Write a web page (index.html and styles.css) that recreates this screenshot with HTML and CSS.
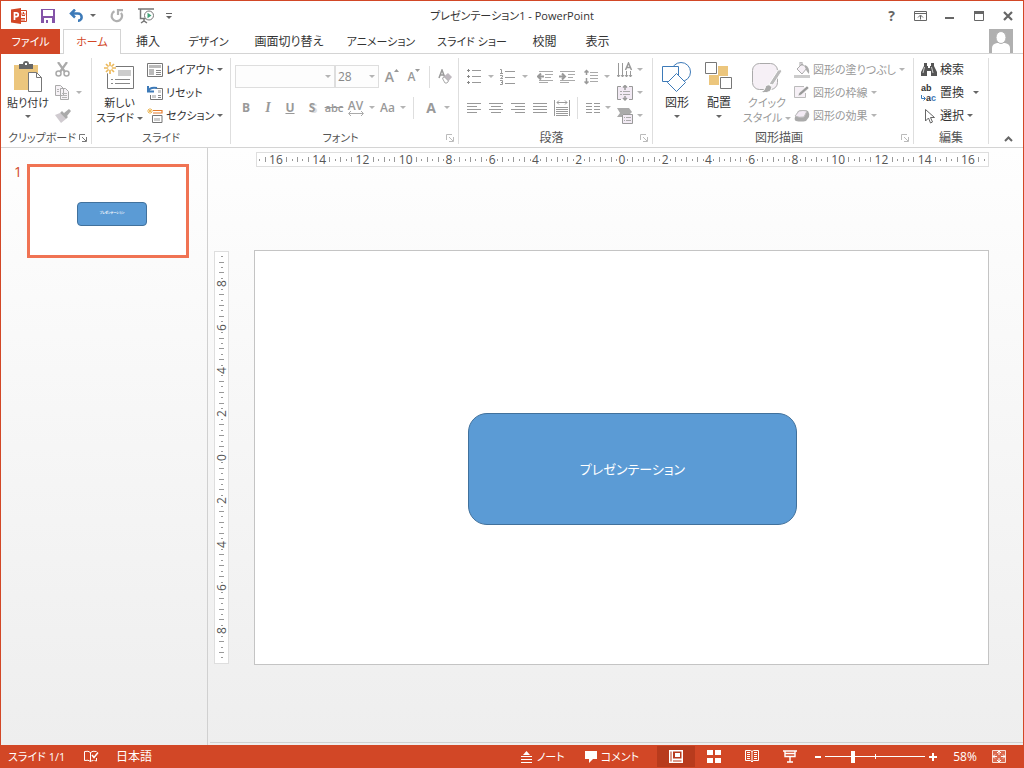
FILE: index.html
```html
<!DOCTYPE html>
<html lang="ja">
<head>
<meta charset="utf-8">
<title>プレゼンテーション1 - PowerPoint</title>
<link rel="stylesheet" href="styles.css">
</head>
<body>
<div class="app">
  <header class="titlebar">
    <div class="quick">
      <svg class="logo" width="16" height="16" viewBox="0 0 16 16"><path d="M8 2.500h7.500v11H8z" fill="#fff" stroke="#d24726"/><path d="M0 1.500 10 0v16L0 14.500z" fill="#d24726"/><path d="M3.500 12V4.800h1.800a1.900 1.900 0 0 1 0 3.900H3.500" fill="none" stroke="#fff" stroke-width="1.700"/><path d="M11 4.500v3h3M10 10.500h4M10 12h4M12.500 4v2h2" stroke="#d24726" fill="none"/></svg>
      <button class="tool save" aria-label="上書き保存"><svg width="14" height="14" viewBox="0 0 14 14"><path d="M0 0h14v14H0z" fill="#8454a8"/><path d="M2 1h10v6H2zM3 9h8v5H3z" fill="#fff"/><path d="M5 11h2v3H5z" fill="#8454a8"/></svg></button>
      <button class="tool undo" aria-label="元に戻す"><svg width="15" height="13" viewBox="0 0 15 13"><path d="M2 4.500h7a3.600 3.600 0 0 1 0 7.300M6 .500l-4 4 4 4" fill="none" stroke="#3d7ab8" stroke-width="2.500"/></svg><i class="caret"></i></button>
      <button class="tool redo" aria-label="繰り返し"><svg width="14" height="14" viewBox="0 0 14 14"><path d="M4.500 2.300a5.200 5.200 0 1 0 6.500 1.500M8 6V1.200h5" fill="none" stroke="#b0b0b0" stroke-width="2.200"/></svg></button>
      <button class="tool show" aria-label="スライド ショー"><svg width="17" height="16" viewBox="0 0 17 16"><path d="M0 1h16M2.500 1v9.500H8M6 11v2M3 15l3-2 3 2" fill="none" stroke="#777" stroke-width="1.500"/><circle cx="11" cy="7.500" r="4.500" fill="#fff" stroke="#777"/><path d="M9.500 4.800v5.400l4-2.700z" fill="#3fa377"/></svg></button>
      <button class="tool more" aria-label="クイック アクセスのカスタマイズ"><span class="bar"></span><i class="caret"></i></button>
    </div>
    <h1 class="doc-title">プレゼンテーション1 - PowerPoint</h1>
    <div class="window-buttons">
      <button aria-label="ヘルプ" class="help">?</button>
      <button aria-label="リボンの表示オプション"><svg width="13" height="10" viewBox="0 0 13 10"><path d="M.5.5h12v9H.5zM.5 2.500h12M6.500 8.500v-4M4 6.500l2.500-2.500L9 6.500" fill="none" stroke="#666"/></svg></button>
      <button aria-label="最小化"><svg width="10" height="10" viewBox="0 0 10 10"><path d="M0 6h9v2H0z" fill="#666"/></svg></button>
      <button aria-label="最大化"><svg width="10" height="10" viewBox="0 0 10 10"><path d="M.5.5h9v9h-9z" fill="none" stroke="#666"/><path d="M0 0h10v3H0z" fill="#666"/></svg></button>
      <button aria-label="閉じる"><svg width="10" height="10" viewBox="0 0 10 10"><path d="m1 1 8 8M9 1 1 9" stroke="#666" stroke-width="2.200"/></svg></button>
    </div>
  </header>

  <nav class="tabs">
    <button class="tab file compact">ファイル</button>
    <button class="tab home compact">ホーム</button>
    <button class="tab insert">挿入</button>
    <button class="tab design compact">デザイン</button>
    <button class="tab transition">画面切り替え</button>
    <button class="tab animation compact">アニメーション</button>
    <button class="tab slideshow compact">スライド ショー</button>
    <button class="tab review">校閲</button>
    <button class="tab display">表示</button>
    <button class="avatar" aria-label="アカウント"><svg width="24" height="24" viewBox="0 0 24 24"><path d="M0 0h24v24H0z" fill="#b0b0b0"/><path d="M3 24v-5q0-4 5-5h8q5 1 5 5v5z" fill="#fff"/><ellipse cx="12" cy="8.500" rx="5" ry="6" fill="#fff" stroke="#b0b0b0"/></svg></button>
  </nav>

  <section class="ribbon">
    <div class="group clipboard">
      <div class="group-body">
        <button class="big paste compact"><svg width="30" height="32" viewBox="0 0 30 32"><path d="M1 4h24v25H1z" fill="#ecc67d"/><path d="M6 3h4q0-3 3-3t3 3h4v5H6z" fill="#666"/><path d="M12 2h2v2h-2z" fill="#fff"/><path d="M15.500 11.500h8l5 5v14h-13z" fill="#fff" stroke="#777"/><path d="M23.500 11.500v5h5" fill="none" stroke="#777"/></svg><span>貼り付け</span><i class="caret"></i></button>
        <div class="stack">
          <button class="item off" aria-label="切り取り"><svg width="15" height="15" viewBox="0 0 15 15"><path d="m3 0 7 10M12 0 5 10" stroke="#aaa" stroke-width="2.200"/><circle cx="3.500" cy="11.500" r="2.500" fill="none" stroke="#aaa" stroke-width="1.500"/><circle cx="11.500" cy="11.500" r="2.500" fill="none" stroke="#aaa" stroke-width="1.500"/></svg></button>
          <button class="item off" aria-label="コピー"><svg width="15" height="15" viewBox="0 0 15 15"><path d="M.5.5h5l3 3v7h-8zM5.500 3.500h5l3 3v8h-8z" fill="#f6f2f6" stroke="#aaa"/><path d="M2 4.500h2M2 6.500h2M7 8.500h5M7 10.500h5M7 12.500h5" stroke="#b4b4b4"/></svg><i class="caret"></i></button>
          <button class="item off" aria-label="書式のコピー/貼り付け"><svg width="16" height="14" viewBox="0 0 16 14"><path d="m0 6 5-2 6 6-5 4z" fill="#d0cbd0"/><path d="m5 4 2-2 6 6-2 2zM9 4l5-4 2 2-4 5z" fill="#aaa"/></svg></button>
        </div>
      </div>
      <div class="group-label compact"><span>クリップボード</span><button class="launcher" aria-label="クリップボードの設定"><svg width="8" height="8" viewBox="0 0 8 8"><path d="M.5 6V.5H6M3 3l4 4M7.500 3v4.500H3" fill="none" stroke="currentColor"/></svg></button></div>
    </div>

    <div class="group slides">
      <div class="group-body">
        <button class="big new-slide compact"><svg width="31" height="30" viewBox="0 0 31 30"><path d="M3.500 4.500h26v22h-26z" fill="#fff" stroke="#777"/><path d="M14 8h13v6H14z" fill="#ccc"/><path d="M7 17.500h2M11 17.500h15M7 21.500h2M11 21.500h15" stroke="#888"/><circle cx="6" cy="6" r="6" fill="#fff"/><path d="M6 0v12M0 6h12M2 2l8 8M10 2l-8 8" stroke="#ecb95c" stroke-width="1.700"/><circle cx="6" cy="6" r="2" fill="#fff"/></svg><span>新しい</span><span>スライド <i class="caret"></i></span></button>
        <div class="stack">
          <button class="item compact"><svg width="16" height="14" viewBox="0 0 16 14"><path d="M.5.5h15v13H.5z" fill="#fff" stroke="#777"/><path d="M2 2h12v3H2zM2 6h5v6H2z" fill="#bbb"/><path d="M9 7.500h5M9 9.500h5M9 11.500h5" stroke="#888"/></svg><span>レイアウト</span><i class="caret"></i></button>
          <button class="item compact"><svg width="16" height="14" viewBox="0 0 16 14"><path d="M9 2.500h6.500v11H3.500V9" fill="#fff" stroke="#777"/><path d="M11 4h3v3h-3zM5 9h4v3H5z" fill="#ccc"/><path d="M1 5.500q2-5 9-3.500M1 0v5.500h6" fill="none" stroke="#3d7ab8" stroke-width="2"/><path d="M11 9.500h3M11 11.500h3" stroke="#888"/></svg><span>リセット</span></button>
          <button class="item compact"><svg width="16" height="15" viewBox="0 0 16 15"><path d="M6 2.500h9v2.500H6" fill="none" stroke="#e57c2c" stroke-width="1.200"/><path d="M5.500 7.500h9.500v7H5.500z" fill="#fff" stroke="#777"/><path d="M7 10h6v3H7z" fill="#ccc"/><path d="M3 0v6M0 3h6M1 1l4 4M5 1 1 5" stroke="#ecb95c"/></svg><span>セクション</span><i class="caret"></i></button>
        </div>
      </div>
      <div class="group-label compact"><span>スライド</span></div>
    </div>

    <div class="group font">
      <div class="group-body rows">
        <div class="row">
          <span class="combo name"><select aria-label="フォント" disabled><option></option></select></span>
          <span class="combo size"><select aria-label="フォント サイズ" disabled><option>28</option></select></span>
          <button class="cell off grow" aria-label="フォント サイズの拡大">A<svg width="5" height="3" viewBox="0 0 5 3"><path d="M0 3h5L2.500 0z" fill="#999"/></svg></button>
          <button class="cell off shrink" aria-label="フォント サイズの縮小">A<svg width="5" height="3" viewBox="0 0 5 3"><path d="M0 0h5L2.500 3z" fill="#999"/></svg></button>
          <span class="rule"></span>
          <button class="cell off" aria-label="書式のクリア"><svg width="15" height="15" viewBox="0 0 15 15"><path d="m1 9 3-8 3 8M2 6h4" fill="none" stroke="#999" stroke-width="1.500"/><path d="m4 9 6-5 4 4-5 6z" fill="#bfb9bf"/><path d="m4.500 9.500 2-1.500 4 4-1.500 2H7z" fill="#fff" stroke="#aaa"/></svg></button>
        </div>
        <div class="row lower">
          <button class="cell off"><b>B</b></button>
          <button class="cell off italic"><b>I</b></button>
          <button class="cell off"><b class="underline">U</b></button>
          <button class="cell off shadow"><b>S</b></button>
          <button class="cell off strike">abc</button>
          <button class="cell wide off spacing" aria-label="文字の間隔"><span>AV<svg width="16" height="5" viewBox="0 0 16 5"><path d="M1 2.500h14M3 0 .500 2.500 3 5M13 0l2.500 2.500L13 5" fill="none" stroke="#aaa"/></svg></span><i class="caret"></i></button>
          <button class="cell wide off case">Aa<i class="caret"></i></button>
          <span class="rule"></span>
          <button class="cell wide off color"><b>A</b><i class="caret"></i></button>
        </div>
      </div>
      <div class="group-label compact"><span>フォント</span><button class="launcher off" aria-label="フォントの設定"><svg width="8" height="8" viewBox="0 0 8 8"><path d="M.5 6V.5H6M3 3l4 4M7.500 3v4.500H3" fill="none" stroke="currentColor"/></svg></button></div>
    </div>

    <div class="group paragraph">
      <div class="group-body">
        <div class="rows">
          <div class="row">
            <button class="cell list off" aria-label="箇条書き"><svg width="14" height="15" viewBox="0 0 14 15"><path d="M5 1.500h9M5 7.500h9M5 13.500h9" stroke="#999"/><path d="M0 1h1V0h1v1h1v1H2v1H1V2H0zM0 7h1V6h1v1h1v1H2v1H1V8H0zM0 13h1v-1h1v1h1v1H2v1H1v-1H0z" fill="#888"/></svg><i class="caret"></i></button>
            <button class="cell list off" aria-label="段落番号"><svg width="15" height="16" viewBox="0 0 15 16"><path d="M5 2.500h10M5 8.500h10M5 14.500h10" stroke="#999"/><path d="M0 .5h1.500V4M0 4.500h3M0 6.500h2.500v1.500L.500 9.500H3M0 11.500h2.500v4H0M1 13.500h1.500" fill="none" stroke="#999"/></svg><i class="caret"></i></button>
            <button class="cell gap off" aria-label="インデントを減らす"><svg width="16" height="12" viewBox="0 0 16 12"><path d="M2 .5h14M8 3.500h8M8 6.500h6M2 9.500h14M2 11.500h9" stroke="#aaa"/><path d="M1 5.500h6M4 2.500l-3 3 3 3" fill="none" stroke="#999" stroke-width="2"/></svg></button>
            <button class="cell off" aria-label="インデントを増やす"><svg width="16" height="12" viewBox="0 0 16 12"><path d="M1 .5h15M9 3.500h7M9 6.500h5M1 9.500h15M1 11.500h9" stroke="#aaa"/><path d="M0 5.500h6M3 2.500l3 3-3 3" fill="none" stroke="#999" stroke-width="2"/></svg></button>
            <button class="cell spread off" aria-label="行間"><svg width="14" height="16" viewBox="0 0 14 16"><path d="M6 3.500h8M6 6.500h8M6 9.500h8M6 12.500h8" stroke="#aaa"/><path d="M2.500 1v5M.500 3.500l2-2 2 2M2.500 9v6M.500 12.500l2 2 2-2" fill="none" stroke="#999" stroke-width="1.500"/></svg><i class="caret"></i></button>
          </div>
          <div class="row">
            <button class="cell off" aria-label="左揃え"><svg width="14" height="12" viewBox="0 0 14 12"><path d="M0 1.500h14M0 4.500h10M0 7.500h14M0 10.500h10" stroke="#999"/></svg></button>
            <button class="cell off" aria-label="中央揃え"><svg width="14" height="12" viewBox="0 0 14 12"><path d="M0 1.500h14M2 4.500h10M0 7.500h14M2 10.500h10" stroke="#999"/></svg></button>
            <button class="cell off" aria-label="右揃え"><svg width="14" height="12" viewBox="0 0 14 12"><path d="M0 1.500h14M4 4.500h10M0 7.500h14M4 10.500h10" stroke="#999"/></svg></button>
            <button class="cell off" aria-label="両端揃え"><svg width="14" height="12" viewBox="0 0 14 12"><path d="M0 1.500h14M0 4.500h14M0 7.500h14M0 10.500h14" stroke="#999"/></svg></button>
            <button class="cell off" aria-label="均等割り付け"><svg width="16" height="16" viewBox="0 0 16 16"><path d="M.5 0v16M15.500 0v16M2 7.500h12M2 9.500h12M2 11.500h12M2 13.500h12M2 15.500h12M3 2.500h10M5 .500l-2 2 2 2M11 .500l2 2-2 2" fill="none" stroke="#999"/></svg></button>
            <span class="rule"></span>
            <button class="cell wide off" aria-label="段組み"><svg width="14" height="12" viewBox="0 0 14 12"><path d="M0 1.500h6M0 4.500h6M0 7.500h6M0 10.500h6M8 1.500h6M8 4.500h6M8 7.500h6M8 10.500h6" stroke="#999"/></svg><i class="caret"></i></button>
          </div>
        </div>
        <div class="stack">
          <button class="item off" aria-label="文字列の方向"><svg width="16" height="16" viewBox="0 0 16 16"><path d="M1.500 1v14M5.500 1v14M9.500 9v6M13.500 9v6M0 13l1.500 2L3 13M4 13l1.500 2L7 13M8 13l1.500 2 1.500-2M12 13l1.500 2 1.500-2" fill="none" stroke="#999"/><path d="m8.500 8 3-7 3 7M9.500 5.500h4" fill="none" stroke="#999" stroke-width="1.500"/></svg><i class="caret"></i></button>
          <button class="item off" aria-label="文字の配置"><svg width="16" height="16" viewBox="0 0 16 16"><path d="M1 2h14v12H1z" fill="#f2eaf4"/><path d="M4 1.500H.500v13H4M12 1.500h3.500v13H12" fill="none" stroke="#999"/><path d="M3 6.500h2M6 6.500h7M3 9.500h2M6 9.500h7" stroke="#aaa"/><path d="M8 0v5M6 2.500 8 .500l2 2M8 11v4.500M6 13l2 2 2-2" fill="none" stroke="#999" stroke-width="1.500"/></svg><i class="caret"></i></button>
          <button class="item off" aria-label="SmartArt に変換"><svg width="16" height="16" viewBox="0 0 16 16"><path d="M0 0h12l3 4-2 2H5v3H0l3-4z" fill="#aaa"/><path d="M5.500 6.500h10v9h-10z" fill="#f2eaf4" stroke="#999"/><path d="M7 9.500h1M9 9.500h5M7 12.500h1M9 12.500h5" stroke="#aaa"/></svg><i class="caret"></i></button>
        </div>
      </div>
      <div class="group-label"><span>段落</span><button class="launcher off" aria-label="段落の設定"><svg width="8" height="8" viewBox="0 0 8 8"><path d="M.5 6V.5H6M3 3l4 4M7.500 3v4.500H3" fill="none" stroke="currentColor"/></svg></button></div>
    </div>

    <div class="group drawing">
      <div class="group-body">
        <button class="big"><svg width="30" height="32" viewBox="0 0 30 32"><circle cx="19" cy="11" r="9.500" fill="#fff" stroke="#3d7ab8"/><path d="M.5 5.500h16v15H.500z" fill="#fff" stroke="#3d7ab8"/><path d="m14.500 12.500 9 9-9 9-9-9z" fill="#fff" stroke="#3d7ab8"/></svg><span>図形</span><i class="caret"></i></button>
        <button class="big"><svg width="28" height="32" viewBox="0 0 28 32"><path d="M13 5h10v10H13zM4 14h10v10H4z" fill="#ecc67d"/><path d="M.5 1.500h11v11H.500zM15.500 16.500h11v11h-11z" fill="#fff" stroke="#777"/></svg><span>配置</span><i class="caret"></i></button>
        <button class="big off quick-style compact"><svg width="30" height="32" viewBox="0 0 30 32"><rect x=".5" y="2.500" width="25" height="26" rx="7" fill="#f6f0f6" stroke="#aaa"/><path d="m17 23 9-14q3-1 4 1l-9 14z" fill="#bbb" stroke="#fff"/><path d="M8 31q5-1 5-4 1-4 5-3 3 2 1 5-3 4-11 2z" fill="#aaa" stroke="#fff"/></svg><span>クイック</span><span>スタイル <i class="caret"></i></span></button>
        <div class="stack">
          <button class="item off compact"><svg width="16" height="16" viewBox="0 0 16 16"><path d="M0 13h16v3H0z" fill="#ccc"/><path d="m3 7 5-5 5 4-5 6zM6 4V0h2v4" fill="#f6f0f6" stroke="#aaa"/><path d="M11 3q5 2 4 9-3-3-4-7" fill="#aaa"/></svg><span>図形の塗りつぶし</span><i class="caret"></i></button>
          <button class="item off compact"><svg width="16" height="16" viewBox="0 0 16 16"><path d="M10 1.500H.500v11h11V8" fill="#f6f0f6" stroke="#bbb"/><path d="m4 11 1-3 8-7 2 2-8 7z" fill="#999" stroke="#fff" stroke-width=".5"/></svg><span>図形の枠線</span><i class="caret"></i></button>
          <button class="item off compact"><svg width="16" height="16" viewBox="0 0 16 16"><path d="m1 9 3-6q5-2 10 0 2 3 1 6l-3 4q-5 1-10 0-2-1-1-4z" fill="#aaa"/><path d="m1 8 4-5q4-1 8 0L10 9q-5 1-9-1z" fill="#f2eaf4" stroke="#bbb"/></svg><span>図形の効果</span><i class="caret"></i></button>
        </div>
      </div>
      <div class="group-label"><span>図形描画</span><button class="launcher off" aria-label="図形描画の設定"><svg width="8" height="8" viewBox="0 0 8 8"><path d="M.5 6V.5H6M3 3l4 4M7.500 3v4.500H3" fill="none" stroke="currentColor"/></svg></button></div>
    </div>

    <div class="group editing">
      <div class="group-body">
        <div class="stack">
          <button class="item"><svg width="16" height="14" viewBox="0 0 16 14"><path d="M3 0h3v3h1v2h2V3h1V0h3v3l3 6v4h-6V8H6v5H0V9l3-6z" fill="#555"/><path d="M3.500 4 2 10M10.500 4l1.500 6" stroke="#fff" stroke-width=".7"/></svg><span>検索</span></button>
          <button class="item replace"><span class="letters" aria-hidden="true"><small>ab</small><small class="low"><svg width="5" height="6" viewBox="0 0 5 6"><path d="M.5 0v3.500H4M2.500 1.500l2 2-2 2" fill="none" stroke="#3d7ab8"/></svg>a<em>c</em></small></span><span>置換</span><i class="caret"></i></button>
          <button class="item"><svg width="16" height="16" viewBox="0 0 16 16"><path d="M4.500 1.500v11.500l3-3 2 5 2-1-2-4.500h4z" fill="#fff" stroke="#666"/></svg><span>選択</span><i class="caret"></i></button>
        </div>
      </div>
      <div class="group-label"><span>編集</span></div>
    </div>
    <button class="collapse" aria-label="リボンを折りたたむ"><svg width="9" height="6" viewBox="0 0 9 6"><path d="m1 5 3.500-3.500L8 5" fill="none" stroke="#666" stroke-width="2"/></svg></button>
  </section>

  <main class="workspace">
    <aside class="thumbs">
      <span class="number">1</span>
      <div class="thumb"><div class="shape small">プレゼンテーション</div></div>
    </aside>
    <section class="editor">
      <div class="ruler across" data-slots="135"></div>
      <div class="canvas">
        <div class="ruler down" data-slots="75"></div>
        <div class="slide"><div class="shape">プレゼンテーション</div></div>
      </div>
    </section>
  </main>

  <footer class="status">
    <span class="page compact">スライド 1/1</span>
    <button class="proof" aria-label="スペル チェック"><svg width="15" height="13" viewBox="0 0 15 13"><path d="M6.500 2.500q-2-2-6-1v9q4-1 6 1 1-1 3-1M6.500 2.500v9M6.500 2.500q2-2 6-1M12.500 8v3l-2-.500" fill="none" stroke="#fff"/><path d="m8 5 2 2.500 4-5" fill="none" stroke="#fff" stroke-width="1.500"/></svg></button>
    <button class="lang">日本語</button>
    <button class="note compact"><svg width="11" height="12" viewBox="0 0 11 12"><path d="M2 4h7L5.500 0z" fill="#fff"/><path d="M0 5.500h11M0 8.500h11M0 11.500h11" stroke="#fff"/></svg>ノート</button>
    <button class="comment compact"><svg width="12" height="12" viewBox="0 0 12 12"><path d="M0 0h12v8H8l-4 4V8H0z" fill="#fff"/></svg>コメント</button>
    <div class="views">
      <button class="active" aria-label="標準"><svg width="14" height="13" viewBox="0 0 14 13"><path d="M0 0h14v13H0z" fill="#fff"/><path d="M1.500 1.500h1v10h-1zM4 1.500h8.500v7H4zM4 10.500h8.500v1H4z" fill="#b83b1d"/><path d="M6 3h5v4H6z" fill="#fff"/></svg></button>
      <button aria-label="スライド一覧"><svg width="14" height="13" viewBox="0 0 14 13"><path d="M0 0h6v5H0zM8 0h6v5H8zM0 8h6v5H0zM8 8h6v5H8z" fill="#fff"/></svg></button>
      <button aria-label="閲覧表示"><svg width="14" height="13" viewBox="0 0 14 13"><path d="M.5.5h5l1.500 1 1.500-1h5v10h-5L7 12l-1.500-1.500h-5zM7 1v11M2 2.500h3M2 4.500h3M2 6.500h3M2 8.500h3M9 2.500h3M9 4.500h3M9 6.500h3M9 8.500h3" fill="none" stroke="#fff"/></svg></button>
      <button aria-label="スライド ショー"><svg width="14" height="13" viewBox="0 0 14 13"><path d="M0 1h14M2 1v5.500h10V1M2 3.500h10M7 7v5M4 12h6" fill="none" stroke="#fff" stroke-width="1.400"/></svg></button>
    </div>
    <div class="zoom">
      <button aria-label="縮小"><svg width="8" height="8" viewBox="0 0 8 8"><path d="M1 3h6v2H1z" fill="#fff"/></svg></button>
      <input type="range" min="0" max="100" value="27" aria-label="ズーム">
      <button aria-label="拡大"><svg width="8" height="8" viewBox="0 0 8 8"><path d="M0 3h8v2H0zM3 0h2v8H3z" fill="#fff"/></svg></button>
      <button class="percent">58%</button>
      <button aria-label="ウィンドウに合わせる"><svg width="14" height="13" viewBox="0 0 14 13"><path d="M.5.5h13v12H.500z" fill="#fff" fill-opacity=".2" stroke="#fff" stroke-opacity=".8"/><path d="M7 1v4M5 3l2-2 2 2M7 12V8M5 10l2 2 2-2M1 6.500h4M9 6.500h4M3 4.500l-2 2 2 2M11 4.500l2 2-2 2" fill="none" stroke="#fff"/></svg></button>
    </div>
  </footer>
</div>
<script src="script.js"></script>
</body>
</html>
```
FILE: styles.css
```css
* { box-sizing: border-box; }
body {
  margin: 0;
  font: 12px/16px "Open Sans", "Noto Sans CJK JP", sans-serif;
  font-feature-settings: "palt";
  color: #333;
}
button, select { font: inherit; font-feature-settings: inherit; color: inherit; }
button {
  display: flex;
  align-items: center;
  justify-content: center;
  margin: 0;
  padding: 0;
  border: 0;
  background: none;
  white-space: nowrap;
}
svg { display: block; flex: none; }
.compact { font-size: 11px; }
.app {
  display: flex;
  flex-direction: column;
  height: 100vh;
  border: 1px solid #d24726;
  border-bottom: 0;
  background: #fff;
}
.caret {
  display: inline-block;
  flex: none;
  border: 3px solid transparent;
  border-top-color: #666;
  border-bottom: 0;
}
.off { color: #999; }
.off .caret { border-top-color: #b4b4b4; }

/* title bar */
.titlebar { display: grid; grid-template-columns: 1fr auto 1fr; align-items: center; height: 28px; padding-top: 1px; }
.quick { display: flex; align-items: center; padding-left: 10px; }
.tool { gap: 6px; height: 24px; }
.save { margin-left: 14px; }
.undo { margin-left: 14px; }
.redo { margin-left: 14px; }
.show { margin-left: 14px; }
.more { flex-direction: column; gap: 2px; margin-left: 11px; }
.bar { width: 6px; height: 1px; background: #666; }
.doc-title { margin: 0; font-size: 11px; font-weight: 400; }
.window-buttons { display: flex; justify-content: flex-end; padding-right: 1px; }
.window-buttons button { width: 29px; height: 24px; }
.window-buttons .help { font-weight: 700; font-size: 14px; color: #666; }

/* tabs */
.tabs { display: flex; height: 25px; border-bottom: 1px solid #d4d4d4; }
.tab { flex: none; height: 25px; }
.file { width: 59px; background: #d24726; color: #fff; }
.home { width: 58px; margin-left: 3px; border: 1px solid #d4d4d4; border-bottom: 0; background: #fff; color: #d24726; }
.insert { width: 54px; }
.design { width: 67px; }
.transition { width: 94px; }
.animation { width: 90px; }
.slideshow { width: 92px; }
.review, .display { width: 53px; }
.avatar { margin: 0 10px 0 auto; }

/* ribbon */
.ribbon { display: flex; height: 94px; padding: 4px 0 3px; border-bottom: 1px solid #d4d4d4; }
.group { display: flex; flex-direction: column; flex: none; border-right: 1px solid #dedede; }
.group-body { display: flex; height: 74px; }
.group-label { display: flex; align-items: center; height: 12px; padding: 0 4px; color: #555; }
.group-label span { flex: 1; text-align: center; white-space: nowrap; }
.launcher { flex: none; width: 8px; color: #777; }
.launcher.off { color: #bbb; }
.clipboard { width: 91px; }
.slides { width: 139px; }
.font { width: 228px; }
.paragraph { width: 194px; }
.drawing { width: 261px; }
.editing { width: 75px; }
.big { flex: none; flex-direction: column; justify-content: flex-start; width: 42px; padding-top: 3px; }
.big svg { margin-bottom: 2px; height: 32px; }
.big span { line-height: 15px; }
.big > .caret { margin-top: 5px; }
.big span .caret { vertical-align: 2px; }
.paste { width: 54px; }
.new-slide { width: 55px; }
.stack { display: flex; flex-direction: column; }
.item { justify-content: flex-start; gap: 3px; height: 23px; }
.clipboard .item { gap: 6px; }
.rows { display: flex; flex-direction: column; padding: 3px 0 0 4px; }
.row { display: flex; align-items: center; height: 31px; }
.cell { flex: none; width: 22px; height: 24px; }
.wide { width: 32px; gap: 5px; }
.list { width: 34px; gap: 7px; }
.spread { width: 38px; gap: 6px; }
.gap { margin-left: 3px; }
.rule { width: 1px; height: 22px; margin: 0 4px; background: #dedede; }
.combo { display: flex; position: relative; height: 23px; border: 1px solid #dedede; }
.combo::after {
  content: "";
  position: absolute;
  right: 3px;
  top: 9px;
  border: 3px solid transparent;
  border-top-color: #b4b4b4;
  border-bottom: 0;
}
.combo select { width: 100%; padding: 0 2px; border: 0; border-radius: 0; appearance: none; background: #fdfdfd; color: #888; opacity: 1; }
.name { width: 100px; }
.size { width: 44px; margin-right: 2px; }
.grow { font-size: 14px; font-weight: 600; }
.shrink { font-weight: 600; }
.grow svg, .shrink svg { align-self: flex-start; margin-top: 4px; }
.italic { font-style: italic; font-family: "Liberation Serif", serif; font-size: 14px; }
.underline { text-decoration: underline; }
.shadow { text-shadow: 2px 1px 0 #ddd; }
.strike { text-decoration: line-through; font-size: 11px; font-weight: 600; }
.spacing span { line-height: 11px; font-weight: 600; }
.case { font-weight: 600; }
.color { width: 40px; gap: 8px; font-size: 14px; }
.paragraph .stack { margin-left: 0; }
.paragraph .rows { width: 158px; flex: none; }
.paragraph .item { gap: 4px; }
.quick-style { width: 54px; }
.drawing .big:first-child { margin-left: 3px; }
.editing .stack { padding-left: 7px; }
.replace .caret { margin-left: 6px; }
.letters { display: flex; flex-direction: column; width: 16px; }
.letters small { display: flex; font: 700 9px/10px "Liberation Sans", sans-serif; }
.letters .low { align-items: center; }
.letters em { font-style: normal; color: #3d7ab8; }
.collapse { align-self: flex-end; margin: 0 10px 2px auto; }

/* workspace */
.workspace { display: flex; flex: 1; min-height: 0; background: linear-gradient(#fefefe, #eee); }
.thumbs { display: flex; align-items: flex-start; gap: 5px; width: 207px; padding: 16px 0 0 13px; border-right: 1px solid #d0d0d0; }
.number { width: 8px; color: #d24726; font-size: 14px; }
.thumb { position: relative; width: 162px; height: 94px; border: 3px solid #f07353; background: #fff; }
.editor { display: flex; flex-direction: column; flex: 1; margin: 0 0 2px 2px; padding: 4px 34px 0 4px; border-bottom: 1px solid #d0d0d0; }
.ruler { display: flex; border: 1px solid #dedede; background: #fff; color: #555; }
.slot { display: flex; flex: 1; align-items: center; justify-content: center; min-width: 0; min-height: 0; }
.across { height: 15px; margin-left: 42px; padding-right: 2px; }
.across .tick { flex: none; width: 1px; height: 5px; background: #999; }
.across .dot { height: 2px; }
.down { flex-direction: column; align-self: stretch; margin: 1px 0; padding: 2px 0; }
.down .tick { flex: none; width: 5px; height: 1px; background: #999; }
.down .dot { width: 2px; }
.down .digit { transform: rotate(-90deg); }
.digit { line-height: 13px; }
.canvas { display: grid; flex: 1; grid-template-columns: 15px 1fr; align-content: center; gap: 25px; padding-top: 6px; }
.slide { position: relative; aspect-ratio: 735 / 415; border: 1px solid #c4c4c4; background: #fff; }
.shape {
  position: absolute;
  left: 29%;
  top: 39%;
  display: flex;
  align-items: center;
  justify-content: center;
  width: 45%;
  height: 27%;
  border: 1px solid #41719c;
  border-radius: 19px;
  background: #5b9bd5;
  color: #fff;
  font-size: 13px;
  white-space: nowrap;
}
.slide .shape { margin-top: 1px; }
.shape.small { left: 30%; top: 40%; padding-bottom: 2px; border-radius: 4px; font-size: 3px; line-height: 4px; font-weight: 700; }

/* status bar */
.status { display: flex; align-items: center; flex: none; height: 23px; padding-left: 8px; margin: 0 -1px; background: #d24726; color: #fff; }
.page { width: 76px; white-space: nowrap; }
.proof { width: 15px; }
.lang { margin-left: 17px; }
.note { gap: 5px; margin-left: auto; }
.comment { gap: 4px; margin-left: 20px; }
.views { display: flex; margin-left: 18px; }
.views button { width: 38px; height: 21px; }
.views .active { background: #b83b1d; }
.zoom { display: flex; align-items: center; margin: 0 18px 0 5px; }
.zoom input {
  width: 100px;
  height: 14px;
  margin: 0 4px 0 3px;
  appearance: none;
  background: linear-gradient(#fff, #fff) center / 100% 1px no-repeat, linear-gradient(#fff, #fff) center / 1px 5px no-repeat;
}
.zoom input::-webkit-slider-thumb { appearance: none; width: 4px; height: 12px; background: #fff; }
.percent { width: 26px; margin: 0 14px 0 15px; }
```
FILE: script.js
```js
// Fill each ruler with ticks; every eighth slot from the centre carries a number.
document.querySelectorAll('.ruler').forEach(function (ruler) {
  var count = Number(ruler.dataset.slots);
  var middle = (count - 1) / 2;
  for (var i = 0; i < count; i++) {
    var offset = Math.abs(i - middle);
    var slot = document.createElement('span');
    slot.className = 'slot';
    var mark = document.createElement('span');
    var nearest = Math.round(offset / 8) * 2;
    if (offset % 8 === 0) {
      mark.className = 'digit';
      mark.textContent = offset / 4;
    } else if (!(nearest >= 10 && Math.abs(offset - nearest * 4) === 1)) {
      mark.className = offset % 2 ? 'tick dot' : 'tick';
    }
    slot.appendChild(mark);
    ruler.appendChild(slot);
  }
});
```
